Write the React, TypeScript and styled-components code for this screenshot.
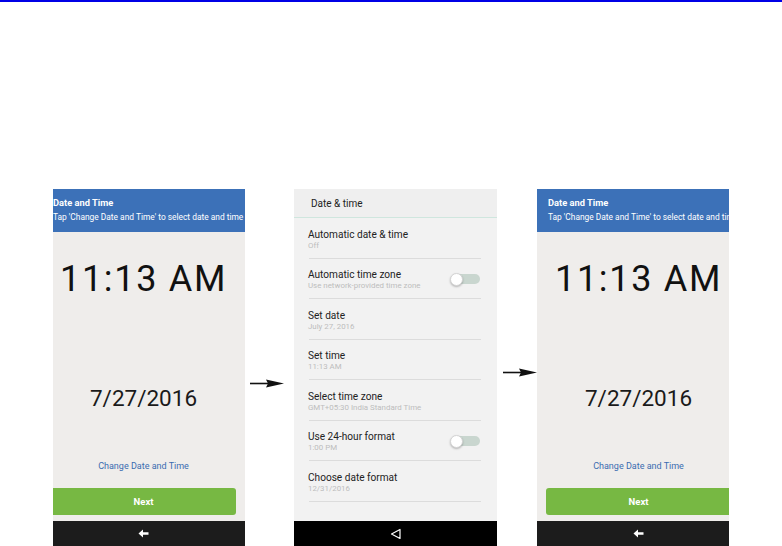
import React from "react";
import styled, { createGlobalStyle } from "styled-components";

const GlobalStyle = createGlobalStyle`
  html, body { margin: 0; padding: 0; background: #ffffff; }
  body { font-family: Roboto, "Noto Sans", "Liberation Sans", sans-serif; }
  * { box-sizing: border-box; }
`;

const Page = styled.div`
  width: 782px;
  height: 546px;
  display: flex;
  flex-direction: column;
  overflow: hidden;
  background: #ffffff;
`;

const TopRule = styled.div`
  height: 2px;
  background: #0000e6;
`;

const Stage = styled.div`
  display: flex;
  align-items: flex-start;
  margin-top: 187px;
  padding-left: 53px;
`;

const CropFrame = styled.div<{ $w: number }>`
  width: ${(p) => p.$w}px;
  height: 357px;
  overflow: hidden;
  flex: none;
`;

const WizardScreen = styled.div<{ $shift: number }>`
  width: 203px;
  height: 357px;
  margin-left: ${(p) => -p.$shift}px;
  display: flex;
  flex-direction: column;
  background: #efedeb;
`;

const BlueHeader = styled.div`
  height: 43px;
  background: #3c71b8;
  padding: 9px 0 0 11px;
  color: #ffffff;
  white-space: nowrap;
`;

const HeaderTitle = styled.div`
  font-size: 9.3px;
  font-weight: 700;
  line-height: 10px;
`;

const HeaderSub = styled.div`
  margin-top: 4px;
  font-size: 8.4px;
  line-height: 10px;
`;

const WizardBody = styled.div`
  flex: 1;
  display: flex;
  flex-direction: column;
  align-items: center;
`;

const BigTime = styled.div`
  margin-top: 27px;
  font-size: 36px;
  line-height: 40px;
  letter-spacing: 1.7px;
  color: #111111;
`;

const BigDate = styled.div`
  margin-top: 86px;
  font-size: 22.5px;
  line-height: 26px;
  color: #1a1a1a;
`;

const ChangeLink = styled.div`
  margin-top: 49px;
  font-size: 9px;
  line-height: 12px;
  color: #3b6cb0;
`;

const NextButton = styled.div`
  margin-top: 16px;
  width: 185px;
  height: 27px;
  border-radius: 3px;
  background: #77b843;
  color: #ffffff;
  font-weight: 700;
  font-size: 9.5px;
  display: flex;
  align-items: center;
  justify-content: center;
`;

const NavBar = styled.div<{ $bg: string }>`
  height: 25px;
  margin-top: auto;
  background: ${(p) => p.$bg};
  display: flex;
  align-items: center;
  justify-content: center;
  flex: none;
`;

const Connector = styled.div<{ $w: number; $top: number; $left: number }>`
  width: ${(p) => p.$w}px;
  flex: none;
  padding-top: ${(p) => p.$top}px;
  padding-left: ${(p) => p.$left}px;
  display: flex;
`;

const SettingsScreen = styled.div`
  width: 203px;
  height: 357px;
  flex: none;
  display: flex;
  flex-direction: column;
  background: #f2f2f2;
`;

const SettingsHeader = styled.div`
  height: 29px;
  padding-left: 17px;
  display: flex;
  align-items: center;
  font-size: 10px;
  color: #222222;
  background: #efefef;
  border-bottom: 1px solid #cfe6de;
`;

const SettingsList = styled.div`
  display: flex;
  flex-direction: column;
  padding: 0 16px 0 14px;
`;

const SettingRow = styled.div`
  height: 40.5px;
  border-bottom: 1px solid #dcdcdc;
  margin-left: 1px;
  display: flex;
  align-items: center;
  justify-content: space-between;
`;

const RowText = styled.div`
  display: flex;
  flex-direction: column;
  margin-left: -1px;
  padding-top: 4px;
`;

const RowTitle = styled.div`
  font-size: 10.1px;
  line-height: 12px;
  color: #222222;
`;

const RowSub = styled.div`
  font-size: 7.9px;
  line-height: 10px;
  color: #bdbdbd;
`;

const Toggle = styled.div`
  position: relative;
  width: 29px;
  height: 10px;
  border-radius: 5px;
  background: #c9d6cf;
  margin-right: 1px;
  margin-top: 2px;
`;

const Thumb = styled.div`
  position: absolute;
  left: -1px;
  top: -1.5px;
  width: 13px;
  height: 13px;
  border-radius: 50%;
  background: #ffffff;
  border: 1px solid #d4d4d4;
  box-shadow: 0 1px 2px rgba(0, 0, 0, 0.25);
`;

const BackArrow = () => (
  <svg width="11" height="9" viewBox="0 0 11 9">
    <path d="M0.5 4.5 L5 0.5 L5 3.2 L10.5 3.2 L10.5 5.8 L5 5.8 L5 8.5 Z" fill="#ffffff" />
  </svg>
);

const NavTriangle = () => (
  <svg width="12" height="12" viewBox="0 0 12 12">
    <path d="M1.5 6 L10 1.5 L10 10.5 Z" fill="none" stroke="#ffffff" strokeWidth="1.2" strokeLinejoin="round" />
  </svg>
);

const FlowArrow = () => (
  <svg width="34" height="9" viewBox="0 0 34 9">
    <line x1="0" y1="4.5" x2="20" y2="4.5" stroke="#111111" strokeWidth="1.6" />
    <path d="M16 0.5 L34 4.5 L16 8.5 L18 4.5 Z" fill="#111111" />
  </svg>
);

const WizardPanel: React.FC<{ width: number; shift: number }> = ({ width, shift }) => (
  <CropFrame $w={width}>
    <WizardScreen $shift={shift}>
      <BlueHeader>
        <HeaderTitle>Date and Time</HeaderTitle>
        <HeaderSub>Tap 'Change Date and Time' to select date and time</HeaderSub>
      </BlueHeader>
      <WizardBody>
        <BigTime>11:13 AM</BigTime>
        <BigDate>7/27/2016</BigDate>
        <ChangeLink>Change Date and Time</ChangeLink>
        <NextButton>Next</NextButton>
      </WizardBody>
      <NavBar $bg="#1c1c1c">
        <BackArrow />
      </NavBar>
    </WizardScreen>
  </CropFrame>
);

const settings: { title: string; sub: string; toggle?: boolean }[] = [
  { title: "Automatic date & time", sub: "Off" },
  { title: "Automatic time zone", sub: "Use network-provided time zone", toggle: true },
  { title: "Set date", sub: "July 27, 2016" },
  { title: "Set time", sub: "11:13 AM" },
  { title: "Select time zone", sub: "GMT+05:30 India Standard Time" },
  { title: "Use 24-hour format", sub: "1:00 PM", toggle: true },
  { title: "Choose date format", sub: "12/31/2016" },
];

export default function App() {
  return (
    <Page>
      <GlobalStyle />
      <TopRule />
      <Stage>
        <WizardPanel width={192} shift={11} />
        <Connector $w={49} $top={190} $left={5}>
          <FlowArrow />
        </Connector>
        <SettingsScreen>
          <SettingsHeader>Date &amp; time</SettingsHeader>
          <SettingsList>
            {settings.map((s) => (
              <SettingRow key={s.title}>
                <RowText>
                  <RowTitle>{s.title}</RowTitle>
                  <RowSub>{s.sub}</RowSub>
                </RowText>
                {s.toggle && (
                  <Toggle>
                    <Thumb />
                  </Toggle>
                )}
              </SettingRow>
            ))}
          </SettingsList>
          <NavBar $bg="#000000">
            <NavTriangle />
          </NavBar>
        </SettingsScreen>
        <Connector $w={40} $top={179} $left={6}>
          <FlowArrow />
        </Connector>
        <WizardPanel width={192} shift={0} />
      </Stage>
    </Page>
  );
}
